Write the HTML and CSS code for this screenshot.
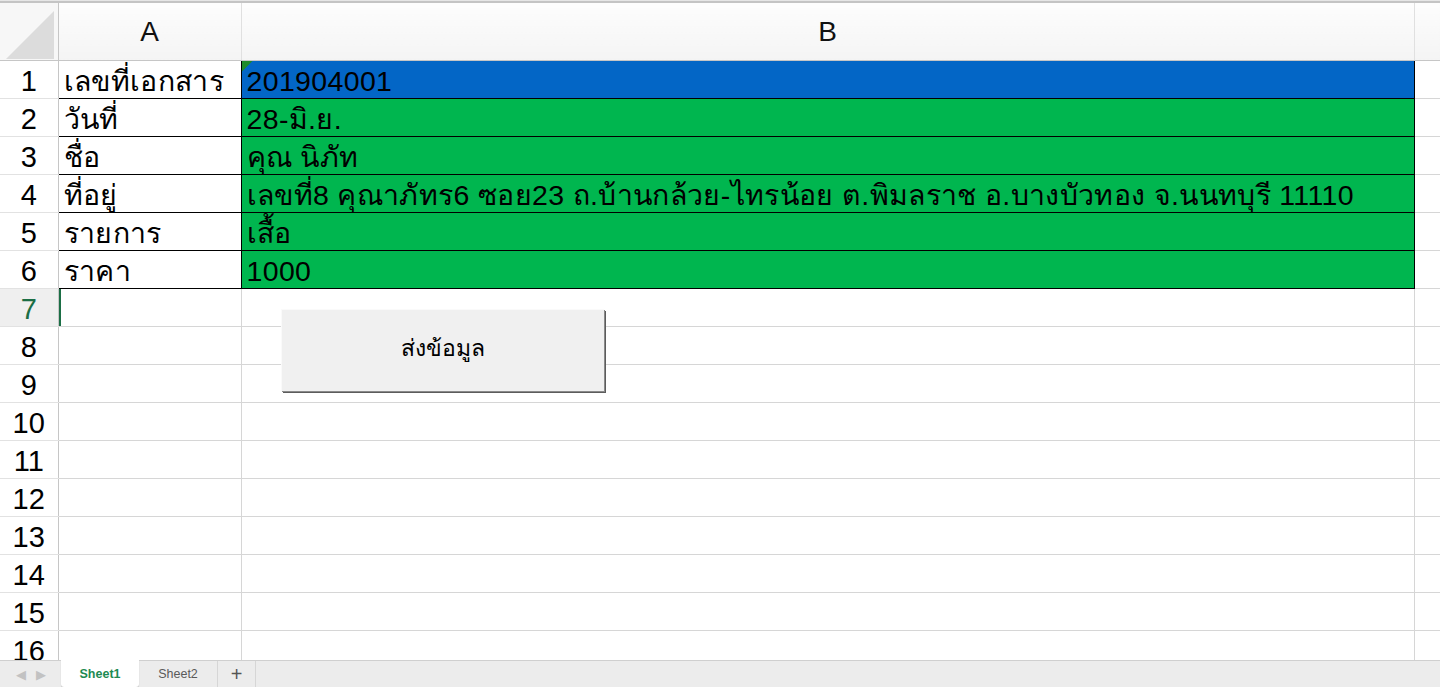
FILE: index.html
```
<!DOCTYPE html>
<html lang="th">
<head>
    <meta charset="UTF-8">
    <meta name="viewport" content="width=device-width, initial-scale=1.0">
    <title>Sheet1</title>
    <link rel="stylesheet" href="styles.css">
</head>
<body>
    <div class="app">
        <div class="sheet">
            <table class="grid">
                <colgroup>
                    <col class="col-rownum">
                    <col class="col-a">
                    <col class="col-b">
                    <col>
                </colgroup>
                <thead>
                    <tr>
                        <th class="corner"><span class="corner-tri"></span></th>
                        <th>A</th>
                        <th>B</th>
                        <th></th>
                    </tr>
                </thead>
                <tbody>
                    <tr>
                        <td class="rownum">1</td>
                        <td class="data">เลขที่เอกสาร</td>
                        <td class="data fill-blue flagged">201904001</td>
                        <td></td>
                    </tr>
                    <tr>
                        <td class="rownum">2</td>
                        <td class="data">วันที่</td>
                        <td class="data fill-green">28-มิ.ย.</td>
                        <td></td>
                    </tr>
                    <tr>
                        <td class="rownum">3</td>
                        <td class="data">ชื่อ</td>
                        <td class="data fill-green">คุณ นิภัท</td>
                        <td></td>
                    </tr>
                    <tr>
                        <td class="rownum">4</td>
                        <td class="data">ที่อยู่</td>
                        <td class="data fill-green">เลขที่8 คุณาภัทร6 ซอย23 ถ.บ้านกล้วย-ไทรน้อย ต.พิมลราช อ.บางบัวทอง จ.นนทบุรี 11110</td>
                        <td></td>
                    </tr>
                    <tr>
                        <td class="rownum">5</td>
                        <td class="data">รายการ</td>
                        <td class="data fill-green">เสื้อ</td>
                        <td></td>
                    </tr>
                    <tr>
                        <td class="rownum">6</td>
                        <td class="data">ราคา</td>
                        <td class="data fill-green">1000</td>
                        <td></td>
                    </tr>
                    <tr>
                        <td class="rownum active">7</td>
                        <td class="selected"></td>
                        <td></td>
                        <td></td>
                    </tr>
                    <tr><td class="rownum">8</td><td></td><td></td><td></td></tr>
                    <tr><td class="rownum">9</td><td></td><td></td><td></td></tr>
                    <tr><td class="rownum">10</td><td></td><td></td><td></td></tr>
                    <tr><td class="rownum">11</td><td></td><td></td><td></td></tr>
                    <tr><td class="rownum">12</td><td></td><td></td><td></td></tr>
                    <tr><td class="rownum">13</td><td></td><td></td><td></td></tr>
                    <tr><td class="rownum">14</td><td></td><td></td><td></td></tr>
                    <tr><td class="rownum">15</td><td></td><td></td><td></td></tr>
                    <tr><td class="rownum">16</td><td></td><td></td><td></td></tr>
                </tbody>
            </table>
            <button class="form-button">ส่งข้อมูล</button>
        </div>
        <div class="tabs">
            <div class="tab-arrows">
                <span class="arrow">&#9664;</span>
                <span class="arrow">&#9654;</span>
            </div>
            <div class="tab active">Sheet1</div>
            <div class="tab">Sheet2</div>
            <div class="tab add">+</div>
        </div>
    </div>
</body>
</html>
```

FILE: styles.css
```
body {
    margin: 0;
    font-family: "Liberation Sans", sans-serif;
    background-color: #fff;
    overflow: hidden;
}
.app {
    height: 687px;
    display: flex;
    flex-direction: column;
    border-top: 1px solid #e6e6e6;
}
.sheet {
    position: relative;
    flex: 1;
    overflow: hidden;
    border-top: 2px solid #c4c4c4;
}
.grid {
    border-collapse: collapse;
    table-layout: fixed;
    width: 1441px;
}
.col-rownum {
    width: 58px;
}
.col-a {
    width: 183px;
}
.col-b {
    width: 1173px;
}
.grid th {
    height: 57px;
    padding: 0;
    font-weight: normal;
    font-size: 28px;
    line-height: 30px;
    color: #111;
    background: linear-gradient(#fdfdfd, #f4f4f4);
    border-right: 1px solid #e0e0e0;
    border-bottom: 1px solid #c6c6c6;
}
.grid th.corner {
    position: relative;
    background: #f7f7f7;
    border-right: 1px solid #c6c6c6;
}
.corner-tri {
    position: absolute;
    left: 6px;
    top: 8px;
    width: 48px;
    height: 48px;
    background: #dcdcdc;
    clip-path: polygon(100% 0, 100% 100%, 0 100%);
}
.grid td {
    height: 38px;
    padding: 3px 0 0 5px;
    box-sizing: border-box;
    font-size: 28.5px;
    line-height: 30px;
    color: #000;
    white-space: nowrap;
    overflow: visible;
    border-right: 1px solid #d6d6d6;
    border-bottom: 1px solid #d6d6d6;
}
.grid td.rownum {
    padding: 3px 0 0 0;
    text-align: center;
    font-size: 29px;
    border-right: 1px solid #c6c6c6;
    border-bottom: 1px solid #e2e2e2;
}
.grid td.rownum.active {
    color: #1b6e45;
    background: #efefef;
}
.grid td.selected {
    box-shadow: inset 2px 0 0 #1b6e45;
}
.grid td.data {
    letter-spacing: 0.35px;
    border: 1px solid #000;
}
.fill-blue {
    background-color: #0366c6;
}
.fill-green {
    background-color: #00b64f;
}
.flagged {
    position: relative;
}
.flagged::before {
    content: "";
    position: absolute;
    left: 0;
    top: 0;
    width: 11px;
    height: 11px;
    background: #1e8a2a;
    clip-path: polygon(0 0, 100% 0, 0 100%);
}
.form-button {
    position: absolute;
    left: 281px;
    top: 306px;
    width: 323px;
    height: 82px;
    padding: 0 0 6px 0;
    font-family: "Liberation Sans", sans-serif;
    font-size: 23px;
    color: #000;
    background-color: #f0f0f0;
    border: none;
    border-top: 1px solid #fafafa;
    border-left: 1px solid #fafafa;
    box-shadow: 1px 1px 0 #8a8a8a, 2px 2px 0 #5c5c5c;
    cursor: pointer;
}
.tabs {
    height: 26px;
    display: flex;
    align-items: stretch;
    background-color: #ececec;
    border-top: 1px solid #cfcfcf;
    border-bottom: 1px solid #b4b4b4;
    font-size: 12.5px;
}
.tab-arrows {
    width: 61px;
    display: flex;
    align-items: center;
    justify-content: center;
    gap: 10px;
    color: #c2c2c2;
    font-size: 13px;
}
.tab {
    width: 78px;
    display: flex;
    align-items: center;
    justify-content: center;
    color: #5a5a5a;
    border-right: 1px solid #d6d6d6;
}
.tab.active {
    margin-top: -1px;
    background: #fff;
    color: #1d8a52;
    font-weight: bold;
    border-right: none;
    border-radius: 0 0 3px 3px;
    box-shadow: 0 1px 1px rgba(0, 0, 0, 0.2);
}
.tab.add {
    width: 37px;
    font-size: 20px;
    color: #555;
}
```
